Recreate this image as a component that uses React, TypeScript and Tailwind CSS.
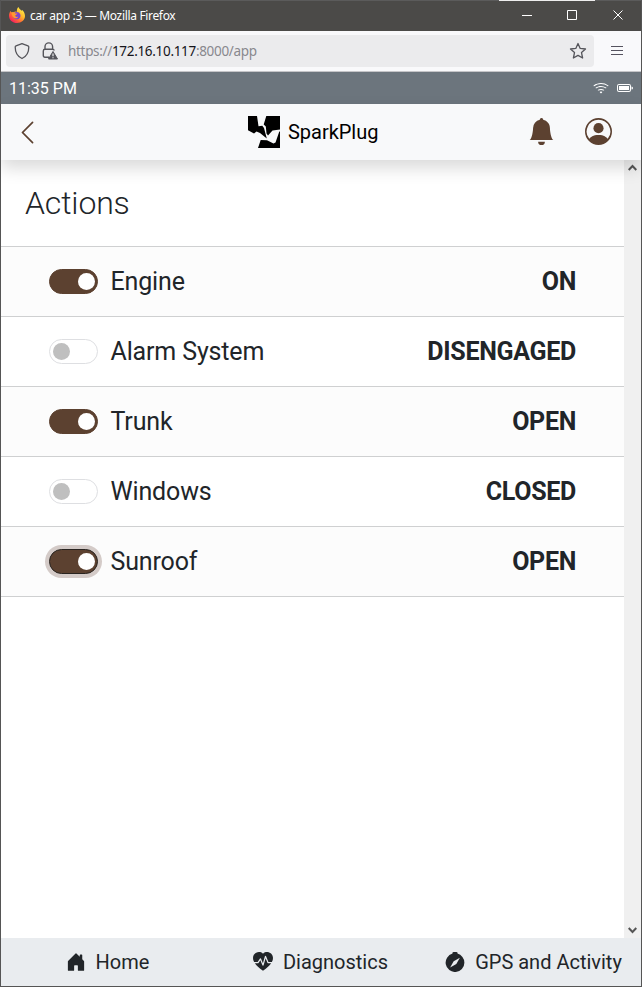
import React from "react";
import { BsBellFill, BsPersonCircle, BsChevronLeft, BsHouseDoorFill, BsWifi, BsBatteryFull, BsCompassFill, BsHeartPulseFill } from "react-icons/bs";

function Firefox() {
  return (
    <svg width="16" height="16" viewBox="0 0 16 16" className="mt-[-2px] shrink-0">
      <defs>
        <linearGradient id="fire" x1="0.85" y1="0.1" x2="0.2" y2="0.9">
          <stop offset="0" stopColor="#fff14a" />
          <stop offset="0.4" stopColor="#ffb52a" />
          <stop offset="0.7" stopColor="#ff6a35" />
          <stop offset="1" stopColor="#f5245c" />
        </linearGradient>
      </defs>
      <path d="M9.500 0c.3 1.500 2 2.400 2.900 3.800l.8-.9C15 4.500 16 6.700 16 9c0 4-3.600 7-8 7s-8-3-8-7.300c0-2 .8-3.700 1.600-4.700l.6 1.200h2.600L6 4.500l2 .3C7.600 3 8 1.200 9.500 0z" fill="url(#fire)" />
      <path d="M5.500 5.800c2-1.400 5-.6 5.800 1.700.8 2.600-1 4.800-3.500 4.800s-4.300-2-3.800-4.300z" fill="#7a45d0" />
      <path d="M2.500 5.500c1.500-.7 3-.1 3.700.9h2.200c-.5 1.300-2 1.300-2.200 2.200.2 1.300 1.800 1.700 3 .8-.8 2.400-4.300 2.600-5.500.1-.5-1-1.200-2.500-1.200-4z" fill="#ff9a30" />
    </svg>
  );
}

function TitleBar() {
  return (
    <div className="flex h-[31px] items-center border-t border-[#5b5b5b] bg-[#4b4a48] pl-2 text-white">
      <Firefox />
      <span className="ml-[5px] whitespace-nowrap font-['Noto_Sans',sans-serif] text-[12px] tracking-[-0.33px]">car app :3 — Mozilla Firefox</span>
      <svg className="ml-auto overflow-visible" width="142" height="30" viewBox="0 0 142 30" fill="none" stroke="white">
        <path d="M0 -.5H96" stroke="#eee" />
        <path d="M23 14.500h10M68.500 9.500h9v9h-9zM114.500 9.500l9 9m0-9l-9 9" />
      </svg>
    </div>
  );
}

function AddressBar() {
  return (
    <div className="flex h-[41px] items-center border-b border-[#c5c5c8] bg-[#f9f9fb] pl-[5px]">
      <div className="flex h-8 w-[588px] items-center rounded bg-[#ebebed] pl-2 text-[#55555b]">
        <svg width="16" height="18" viewBox="0 0 16 18" fill="none" stroke="currentColor" strokeWidth="1.300">
          <path d="M8 1.600l6 2.200c.7.3.8.7.8 1.200 0 5.500-2.300 9.500-6.800 11.500C3.500 14.500 1.200 10.500 1.200 5c0-.5.100-.9.800-1.200z" strokeLinejoin="round" />
        </svg>
        <svg className="ml-3" width="17" height="18" viewBox="0 0 17 18" fill="none" stroke="currentColor" strokeWidth="1.400">
          <path d="M3 7V4.700a3.800 3.800 0 0 1 7.600 0V7M7 15.300H3q-1.700 0-1.700-1.700V9q0-1.700 1.700-1.700h7.500q1.500 0 1.700 1.200" />
          <path d="M11 9.500l4.500 7.500H6.500z" fill="currentColor" strokeWidth="1" strokeLinejoin="round" />
          <path d="M11 11.500v2.700m0 1v1" stroke="#ebebed" strokeWidth="1.200" />
        </svg>
        <span className="ml-[9px] mt-[1px] whitespace-nowrap font-['Noto_Sans',sans-serif] text-[13.500px] tracking-[-0.32px] text-[#88888d]">https://<span className="text-[#15141a]">172.16.10.117</span>:8000/app</span>
        <svg className="ml-auto mr-[7px]" width="18" height="18" viewBox="0 0 18 18" fill="none" stroke="currentColor" strokeWidth="1.300" strokeLinejoin="round">
          <path d="M9 1.500l2.200 4.900 5.300.6-4 3.600 1.100 5.400L9 13.400 4.400 16l1.100-5.400L1.500 7l5.300-.6z" />
        </svg>
      </div>
      <svg className="ml-[17px]" width="12" height="12" viewBox="0 0 12 12" stroke="#55535f" strokeWidth="1.200"><path d="M0 1.500h12M0 5.500h12M0 9.500h12" /></svg>
    </div>
  );
}

function Logo() {
  return (
    <svg width="32" height="32" viewBox="0 0 32 32">
      <path d="M0 0H9L10.500 10.200 14.300 9.800 16 12 18.800 22.500 12 17 8.500 15.500 6 17.500 0 14.200zM18.300 0H32V13.500L24.500 14.500 20 19.500 18.500 17.500 17.800 10.500 15.700 8.500zM12.700 24 19 24.300 25.500 27.500 27.500 26.500 31.300 15.500H32V32H10z" />
    </svg>
  );
}

function Toggle({ on, focus }: { on: boolean; focus?: boolean }) {
  return (
    <span className={"flex h-[25px] w-[49px] shrink-0 items-center rounded-full border " + (on ? "justify-end bg-[#5c4130] pr-[2.5px] " : "justify-start border-[#dedfe2] bg-white pl-[3px] ") + (focus ? "border-[#292420] ring-4 ring-[#d4cbc8]" : on ? "border-[#5c4130]" : "")}>
      <span className={"size-[17px] rounded-full " + (on ? "bg-white" : "bg-[#bfbfbf]")} />
    </span>
  );
}

const actions = [
  { name: "Engine", state: "ON", on: true },
  { name: "Alarm System", state: "DISENGAGED", on: false },
  { name: "Trunk", state: "OPEN", on: true },
  { name: "Windows", state: "CLOSED", on: false },
  { name: "Sunroof", state: "OPEN", on: true, focus: true },
];

export default function App() {
  return (
    <div className="flex h-[987px] w-[642px] flex-col overflow-hidden border-x border-b border-[#555] bg-white font-[Roboto,sans-serif] text-[#212529]">
      <TitleBar />
      <AddressBar />
      <div className="flex h-8 items-center bg-[#6c757d] pl-2 pr-[8px] text-white">
        <span className="pt-px text-[16px]">11:35 PM</span>
        <BsWifi className="ml-auto size-4" />
        <BsBatteryFull className="ml-2 size-4" />
      </div>
      <header className="z-10 flex h-14 shrink-0 items-center bg-[#f8f9fa] text-[#5c4130] shadow-[0_8px_16px_rgba(0,0,0,0.15)]">
        <BsChevronLeft className="ml-[13px] size-[27px]" />
        <div className="ml-[207px] flex items-center gap-2 text-black">
          <Logo />
          <span className="text-[20px] tracking-[-0.03px]">SparkPlug</span>
        </div>
        <BsBellFill className="mb-px ml-auto size-[27px]" />
        <BsPersonCircle className="mb-px ml-[30px] mr-[29px] size-[27px]" />
      </header>
      <div className="flex h-[778px] shrink-0">
        <main className="flex-1">
          <h1 className="flex h-[86px] items-center pl-6 text-[32px] font-light tracking-[-0.15px]">Actions</h1>
          <ul className="border-t border-[#cfd0d1]">
            {actions.map((a) => (
              <li key={a.name} className="flex h-[70px] items-center border-b border-[#cfd0d1] px-12 text-[25px] odd:bg-[#fcfcfc]">
                <Toggle on={a.on} focus={a.focus} />
                <span className="ml-[12.5px] pt-px tracking-[-0.15px]">{a.name}</span>
                <span className="ml-auto pt-px font-bold tracking-[-0.3px]">{a.state}</span>
              </li>
            ))}
          </ul>
        </main>
        <div className="flex w-[17px] flex-col items-center justify-between bg-[#f0f0f0] pb-[4px] pt-[4px]">
          <svg width="9" height="8" viewBox="0 0 9 8" fill="none" stroke="#555" strokeWidth="2"><path d="M.7 6l3.800-4 3.800 4" /></svg>
          <svg width="9" height="8" viewBox="0 0 9 8" fill="none" stroke="#555" strokeWidth="2"><path d="M.7 2l3.800 4 3.800-4" /></svg>
        </div>
      </div>
      <nav className="flex h-12 shrink-0 items-center bg-[#e9ecef] text-[20px]">
        <span className="flex w-[213px] items-center justify-center gap-[10px]"><BsHouseDoorFill />Home</span>
        <span className="flex w-[213px] items-center justify-center gap-[10px]"><BsHeartPulseFill />Diagnostics</span>
        <span className="flex w-[213px] items-center justify-center gap-[10px] whitespace-nowrap"><BsCompassFill />GPS and Activity</span>
      </nav>
    </div>
  );
}
